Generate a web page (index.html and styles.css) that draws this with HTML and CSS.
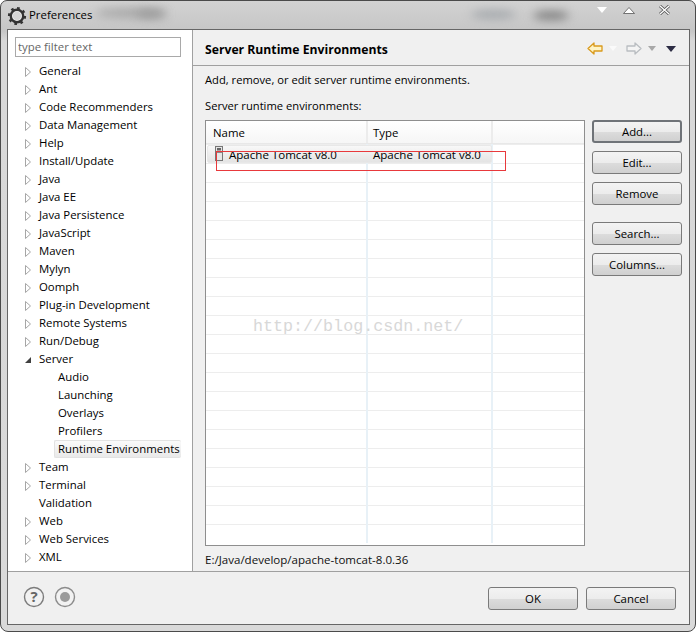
FILE: index.html
```html
<!DOCTYPE html>
<html lang="en">
<head>
<meta charset="utf-8">
<title>Preferences</title>
<link rel="stylesheet" href="styles.css">
</head>
<body>
<svg class="defs" width="0" height="0">
  <symbol id="closed" viewBox="0 0 8 12"><path d="M1.5 1.5 L6.5 6 L1.5 10.5 Z" fill="#fff" stroke="#a6a6a6"/></symbol>
  <symbol id="open" viewBox="0 0 8 12"><path d="M7 3 V9 H1 Z" fill="#404040"/></symbol>
</svg>
<div class="window">
  <div class="blur blur-a"></div><div class="blur blur-b"></div><div class="blur blur-c"></div><div class="blur blur-d"></div>
  <header class="titlebar">
    <svg class="gear" width="20" height="20" viewBox="0 0 20 20"><circle cx="10" cy="10" r="6.2" fill="#eee" stroke="#333" stroke-width="2.4"/><circle cx="10" cy="10" r="7.8" fill="none" stroke="#333" stroke-width="2.6" stroke-dasharray="2.6 3.5"/><circle cx="10" cy="10" r="4.2" fill="#d5d5d5"/></svg>
    <span class="title">Preferences</span>
    <div class="winctl">
      <svg class="ctl-min" width="10" height="6" viewBox="0 0 10 6"><path d="M0 0H10L5 6Z" fill="#fff"/></svg>
      <svg class="ctl-max" width="12" height="7" viewBox="0 0 12 7"><path d="M6 .5L11.5 6.5H.5Z" fill="#fff" stroke="#555" stroke-width=".8"/></svg>
      <svg class="ctl-close" width="11" height="10" viewBox="0 0 11 10"><path d="M1 1L10 9M10 1L1 9" stroke="#555" stroke-width="3"/><path d="M1 1L10 9M10 1L1 9" stroke="#fff" stroke-width="1.4"/></svg>
    </div>
  </header>
  <div class="dialog">
    <div class="main">
      <aside class="sidebar">
        <input class="filter" type="text" placeholder="type filter text">
        <ul class="tree">
          <li class="node"><svg class="tw"><use href="#closed"/></svg>General</li>
          <li class="node"><svg class="tw"><use href="#closed"/></svg>Ant</li>
          <li class="node"><svg class="tw"><use href="#closed"/></svg>Code Recommenders</li>
          <li class="node"><svg class="tw"><use href="#closed"/></svg>Data Management</li>
          <li class="node"><svg class="tw"><use href="#closed"/></svg>Help</li>
          <li class="node"><svg class="tw"><use href="#closed"/></svg>Install/Update</li>
          <li class="node"><svg class="tw"><use href="#closed"/></svg>Java</li>
          <li class="node"><svg class="tw"><use href="#closed"/></svg>Java EE</li>
          <li class="node"><svg class="tw"><use href="#closed"/></svg>Java Persistence</li>
          <li class="node"><svg class="tw"><use href="#closed"/></svg>JavaScript</li>
          <li class="node"><svg class="tw"><use href="#closed"/></svg>Maven</li>
          <li class="node"><svg class="tw"><use href="#closed"/></svg>Mylyn</li>
          <li class="node"><svg class="tw"><use href="#closed"/></svg>Oomph</li>
          <li class="node"><svg class="tw"><use href="#closed"/></svg>Plug-in Development</li>
          <li class="node"><svg class="tw"><use href="#closed"/></svg>Remote Systems</li>
          <li class="node"><svg class="tw"><use href="#closed"/></svg>Run/Debug</li>
          <li class="node"><svg class="tw"><use href="#open"/></svg>Server</li>
          <li class="node child"><span class="lbl">Audio</span></li>
          <li class="node child"><span class="lbl">Launching</span></li>
          <li class="node child"><span class="lbl">Overlays</span></li>
          <li class="node child"><span class="lbl">Profilers</span></li>
          <li class="node child selected"><span class="lbl">Runtime Environments</span></li>
          <li class="node"><svg class="tw"><use href="#closed"/></svg>Team</li>
          <li class="node"><svg class="tw"><use href="#closed"/></svg>Terminal</li>
          <li class="node leaf">Validation</li>
          <li class="node"><svg class="tw"><use href="#closed"/></svg>Web</li>
          <li class="node"><svg class="tw"><use href="#closed"/></svg>Web Services</li>
          <li class="node"><svg class="tw"><use href="#closed"/></svg>XML</li>
        </ul>
      </aside>
      <section class="page">
        <div class="page-head">
          <h1 class="page-title">Server Runtime Environments</h1>
          <div class="nav">
            <svg class="nav-back" width="16" height="13" viewBox="0 0 16 13"><path d="M1 6.5L7 1V4H15V9H7V12Z" fill="#fff4c4" stroke="#d99a1c" stroke-width="1.3" stroke-linejoin="round"/></svg>
            <svg class="nav-drop" width="8" height="5" viewBox="0 0 8 5"><path d="M0 0H8L4 5Z" fill="#fafafa"/></svg>
            <svg class="nav-fwd" width="16" height="13" viewBox="0 0 16 13"><path d="M15 6.5L9 1V4H1V9H9V12Z" fill="#f4f4f4" stroke="#b9bdc1" stroke-width="1.3" stroke-linejoin="round"/></svg>
            <svg class="nav-drop2" width="8" height="5" viewBox="0 0 8 5"><path d="M0 0H8L4 5Z" fill="#a8a8a8"/></svg>
            <svg class="nav-menu" width="10" height="6" viewBox="0 0 10 6"><path d="M0 0H10L5 6Z" fill="#2c2c44"/></svg>
          </div>
        </div>
        <div class="page-body">
          <p class="desc">Add, remove, or edit server runtime environments.</p>
          <p class="caption">Server runtime environments:</p>
          <div class="table-row">
            <div class="table">
              <div class="thead"><span class="c1">Name</span><span class="c2">Type</span></div>
              <div class="tbody">
                <div class="trow"><svg class="srv" width="9" height="16" viewBox="0 0 9 16"><rect x=".5" y=".5" width="7" height="14" fill="#e6e6e6" stroke="#777"/><rect x="2" y="2" width="4" height="2.5" fill="#666"/><path d="M1 6.5H7.5" stroke="#888"/></svg><span class="c1">Apache Tomcat v8.0</span><span class="c2">Apache Tomcat v8.0</span></div>
              </div>
              <div class="watermark">http://blog.csdn.net/</div>
              <div class="redbox"></div>
            </div>
            <div class="buttons">
              <button class="btn default">Add...</button>
              <button class="btn">Edit...</button>
              <button class="btn">Remove</button>
              <button class="btn gap">Search...</button>
              <button class="btn">Columns...</button>
            </div>
          </div>
          <p class="path">E:/Java/develop/apache-tomcat-8.0.36</p>
        </div>
      </section>
    </div>
    <footer class="footer">
      <div class="helpers">
        <svg width="22" height="22" viewBox="0 0 22 22"><circle cx="11" cy="11" r="9.5" fill="#f2f2f2" stroke="#7c7c7c" stroke-width="1.4"/><text x="11" y="16" text-anchor="middle" class="qm">?</text></svg>
        <svg width="22" height="22" viewBox="0 0 22 22"><circle cx="11" cy="11" r="9.5" fill="#f2f2f2" stroke="#8c8c8c" stroke-width="1.4"/><circle cx="11" cy="11" r="5" fill="#9a9a9a"/></svg>
      </div>
      <div class="actions">
        <button class="btn">OK</button>
        <button class="btn">Cancel</button>
      </div>
    </footer>
  </div>
</div>
</body>
</html>
```
FILE: styles.css
```css
* { box-sizing: border-box; }
html, body { margin: 0; padding: 0; }
body { width: 696px; height: 632px; overflow: hidden; font: 11.4px/18px "Open Sans", "Liberation Sans", sans-serif; color: #000; background: #fff; }
.defs { position: absolute; }

.window {
  position: relative; width: 696px; height: 632px; overflow: hidden;
  border: 1px solid #4a4a4a; border-radius: 7px 7px 8px 8px;
  background: linear-gradient(#d2d2d2, #c6c6c6 30px, #d8d8d8 40px, #d9d9d9);
  display: flex; flex-direction: column;
}
.blur { position: absolute; border-radius: 50%; filter: blur(5px); }
.blur-a { left: 95px; top: 7px; width: 70px; height: 10px; background: #a8a8a8; }
.blur-b { left: 135px; top: 9px; width: 30px; height: 8px; background: #999; }
.blur-c { left: 470px; top: 9px; width: 45px; height: 9px; background: #a5a9ad; }
.blur-d { left: 532px; top: 10px; width: 36px; height: 9px; background: #808080; }

.titlebar { position: relative; height: 28px; flex: none; display: flex; align-items: center; padding: 0 0 0 6px; }
.gear { flex: none; margin-top: 1px; }
.title { margin-left: 2px; }
.winctl { margin-left: auto; display: flex; align-items: center; padding: 0 25px 10px 0; }
.ctl-max { margin-left: 16px; }
.ctl-close { margin-left: 24px; }

.dialog {
  position: relative; margin-left: 6px; width: 683px; height: 596px; flex: none;
  border: 1px solid #666; background: #f0f0f0;
  display: flex; flex-direction: column;
}
.main { height: 542px; flex: none; display: flex; border-bottom: 1px solid #a0a0a0; }

.sidebar { width: 185px; flex: none; background: #fff; border-right: 1px solid #a0a0a0; padding: 7px 0 0 7px; }
.filter {
  display: block; width: 166px; height: 20px; padding: 0 2px 2px; margin: 0;
  border: 1px solid #a9a9a9; outline: 0; background: #fff;
  font: 11.4px "Open Sans", "Liberation Sans", sans-serif;
}
.filter::placeholder { color: #666; opacity: 1; }
.tree { list-style: none; margin: 5px 0 0; padding: 0; }
.node { height: 18px; line-height: 18px; display: flex; align-items: center; padding-left: 9px; white-space: nowrap; color: #000; }
.tw { width: 8px; height: 12px; flex: none; margin-right: 7px; margin-top: 1px; }
.leaf { padding-left: 24px; }
.child { padding-left: 39px; }
.lbl { padding: 0 1px 0 4px; height: 18px; }
.selected .lbl { width: 127px; background: linear-gradient(#fafafa, #e9e9e9); border-radius: 2px; border: 1px solid #e2e2e2; border-right: 0; line-height: 16px; padding-left: 3px; }

.page { flex: 1; min-width: 0; display: flex; flex-direction: column; }
.page-head { height: 36px; flex: none; display: flex; align-items: center; padding: 5px 0 0 12px; border-bottom: 1px solid #a0a0a0; }
.page-title { margin: 0; font-size: 12.2px; font-weight: 700; line-height: 18px; }
.nav { margin-left: auto; display: flex; align-items: center; padding: 0 13px 3px 0; }
.nav-drop { margin: 0 0 0 6px; }
.nav-fwd { margin-left: 9px; }
.nav-drop2 { margin-left: 6px; }
.nav-menu { margin-left: 10px; }

.page-body { padding: 5px 0 0 12px; }
.desc { margin: 0; height: 18px; font-size: 11.2px; }
.caption { margin: 8px 0 0; height: 18px; font-size: 11.2px; }
.table-row { display: flex; margin-top: 5px; }
.table {
  position: relative; width: 380px; height: 426px; flex: none;
  border: 1px solid #8e8e8e; background: #fff;
  display: flex; flex-direction: column;
}
.thead { height: 23px; flex: none; display: flex; align-items: center; padding: 1px 0 0 7px; background: linear-gradient(#fff, #f6f6f6); border-bottom: 1px solid #e8e8e8; position: relative; }
.thead::before, .thead::after { content: ""; position: absolute; top: 0; bottom: 0; width: 2px; background: #ececec; }
.thead::before { left: 160px; }
.thead::after { left: 285px; }
.c1 { width: 160px; flex: none; }
.c2 { width: 125px; flex: none; }
.tbody {
  flex: 1; position: relative; margin-bottom: 2px;
  background:
    linear-gradient(#e8f1f7, #e8f1f7) 160px 0 / 2px 100% no-repeat,
    linear-gradient(#e8f1f7, #e8f1f7) 285px 0 / 2px 100% no-repeat,
    repeating-linear-gradient(#fff 0 18px, #ededed 18px 19px) 0 1px;
}
.trow { position: relative; height: 18px; margin: 1px 0 0 1px; width: 285px; display: flex; align-items: center; padding: 1px 0 0 21px; font-size: 11.55px; background: linear-gradient(#f8f8f8, #e4e4e4); border: 1px solid #e8e8e8; border-radius: 2px; }
.trow .c1 { width: 144px; }
.srv { position: absolute; left: 7px; top: 0; }
.watermark { position: absolute; left: 47px; top: 196px; font: 16.7px/20px "Liberation Mono", monospace; color: #d8d8d8; white-space: nowrap; pointer-events: none; }
.redbox { position: absolute; left: 10px; top: 30px; width: 290px; height: 20px; border: 1px solid #e8393c; pointer-events: none; }

.buttons { margin-left: 7px; width: 90px; display: flex; flex-direction: column; gap: 8px; }
.btn {
  display: block; width: 90px; height: 23px; padding: 0 0 1px; margin: 0;
  font: 11.4px "Open Sans", "Liberation Sans", sans-serif; color: #000;
  border: 1px solid #7a7a7a; border-radius: 3px;
  background: linear-gradient(#f3f3f3, #ececec 50%, #dcdcdc 52%, #d0d0d0);
}
.btn.default { border: 2px solid #6f7378; }
.btn.gap { margin-top: 9px; }
.path { margin: 5px 0 0; height: 18px; font-size: 11.55px; color: #111; }

.footer { flex: 1; display: flex; align-items: flex-start; padding: 14px 13px 0 15px; }
.helpers { display: flex; gap: 9px; }
.qm { font: 700 15px "Open Sans", sans-serif; fill: #666; }
.actions { margin-left: auto; display: flex; gap: 8px; padding-top: 1px; }
```
